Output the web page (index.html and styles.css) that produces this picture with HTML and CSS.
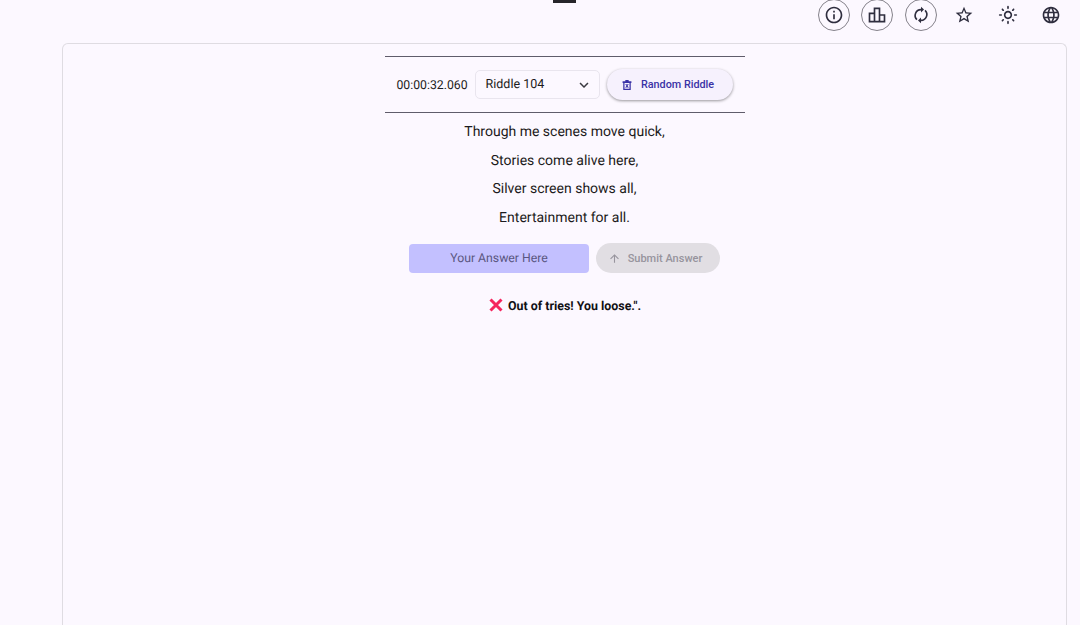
FILE: index.html
```html
<!DOCTYPE html>
<html lang="en">
<head>
    <meta charset="UTF-8">
    <meta name="viewport" content="width=device-width, initial-scale=1.0">
    <title>Riddles</title>
    <link rel="stylesheet" href="styles.css">
</head>
<body>
    <header class="topbar">
        <div class="logo"></div>
        <button class="icon-btn outlined" aria-label="Info">
            <svg viewBox="0 0 24 24"><path d="M11 7h2v2h-2zm0 4h2v6h-2zm1-9C6.48 2 2 6.48 2 12s4.48 10 10 10 10-4.48 10-10S17.52 2 12 2zm0 18c-4.41 0-8-3.59-8-8s3.59-8 8-8 8 3.59 8 8-3.59 8-8 8z"/></svg>
        </button>
        <button class="icon-btn outlined" aria-label="Leaderboard">
            <svg viewBox="0 0 24 24"><path d="M16 11V3H8v6H2v12h20V11h-6zm-6-6h4v14h-4V5zm-6 6h4v8H4v-8zm16 8h-4v-6h4v6z"/></svg>
        </button>
        <button class="icon-btn outlined" aria-label="Reset">
            <svg viewBox="0 0 24 24"><path d="M12 6.500V9l3.600-3.500L12 2v2.500a8 8 0 0 0-5.600 13.700l1.400-1.400A6 6 0 0 1 12 6.500zm5.600-.7-1.400 1.400A6 6 0 0 1 12 17.500V15l-3.600 3.500L12 22v-2.500a8 8 0 0 0 5.600-13.700z"/></svg>
        </button>
        <button class="icon-btn" aria-label="Favourite">
            <svg viewBox="0 0 24 24"><path d="M22 9.24l-7.19-.62L12 2 9.19 8.63 2 9.24l5.46 4.73L5.82 21 12 17.27 18.18 21l-1.63-7.03L22 9.24zM12 15.4l-3.76 2.27 1-4.28-3.32-2.88 4.38-.38L12 6.1l1.71 4.04 4.38.38-3.32 2.88 1 4.28L12 15.4z"/></svg>
        </button>
        <button class="icon-btn" aria-label="Theme">
            <svg viewBox="0 0 24 24"><path d="M12 9c1.65 0 3 1.35 3 3s-1.35 3-3 3-3-1.35-3-3 1.35-3 3-3m0-2c-2.76 0-5 2.24-5 5s2.24 5 5 5 5-2.24 5-5-2.24-5-5-5zM2 13h2c.55 0 1-.45 1-1s-.45-1-1-1H2c-.55 0-1 .45-1 1s.45 1 1 1zm18 0h2c.55 0 1-.45 1-1s-.45-1-1-1h-2c-.55 0-1 .45-1 1s.45 1 1 1zM11 2v2c0 .55.45 1 1 1s1-.45 1-1V2c0-.55-.45-1-1-1s-1 .45-1 1zm0 18v2c0 .55.45 1 1 1s1-.45 1-1v-2c0-.55-.45-1-1-1s-1 .45-1 1zM5.99 4.58c-.39-.39-1.03-.39-1.41 0-.39.39-.39 1.03 0 1.41l1.06 1.06c.39.39 1.03.39 1.41 0s.39-1.03 0-1.41L5.99 4.58zm12.37 12.37c-.39-.39-1.03-.39-1.41 0-.39.39-.39 1.03 0 1.41l1.06 1.06c.39.39 1.03.39 1.41 0 .39-.39.39-1.03 0-1.41l-1.06-1.06zm1.06-10.96c.39-.39.39-1.03 0-1.41-.39-.39-1.03-.39-1.41 0l-1.06 1.06c-.39.39-.39 1.03 0 1.41s1.03.39 1.41 0l1.06-1.06zM7.05 18.36c.39-.39.39-1.03 0-1.41-.39-.39-1.03-.39-1.41 0l-1.06 1.06c-.39.39-.39 1.03 0 1.41s1.03.39 1.41 0l1.06-1.06z"/></svg>
        </button>
        <button class="icon-btn" aria-label="Language">
            <svg viewBox="0 0 24 24"><path d="M11.99 2C6.47 2 2 6.48 2 12s4.47 10 9.99 10C17.52 22 22 17.52 22 12S17.52 2 11.99 2zm6.93 6h-2.95c-.32-1.25-.78-2.45-1.38-3.56 1.84.63 3.37 1.91 4.33 3.56zM12 4.04c.83 1.2 1.48 2.53 1.91 3.96h-3.82c.43-1.43 1.08-2.76 1.91-3.96zM4.26 14C4.1 13.36 4 12.69 4 12s.1-1.36.26-2h3.38c-.08.66-.14 1.32-.14 2 0 .68.06 1.34.14 2H4.26zm.82 2h2.95c.32 1.25.78 2.45 1.38 3.56-1.84-.63-3.37-1.9-4.33-3.56zm2.95-8H5.08c.96-1.66 2.49-2.93 4.33-3.56C8.81 5.55 8.35 6.75 8.03 8zM12 19.96c-.83-1.2-1.48-2.53-1.91-3.96h3.82c-.43 1.43-1.08 2.76-1.91 3.96zM14.34 14H9.66c-.09-.66-.16-1.32-.16-2 0-.68.07-1.35.16-2h4.68c.09.65.16 1.32.16 2 0 .68-.07 1.34-.16 2zm.25 5.56c.6-1.11 1.06-2.31 1.38-3.56h2.95c-.96 1.65-2.49 2.93-4.33 3.56zM16.36 14c.08-.66.14-1.32.14-2 0-.68-.06-1.34-.14-2h3.38c.16.64.26 1.31.26 2s-.1 1.36-.26 2h-3.38z"/></svg>
        </button>
    </header>

    <main class="card">
        <section class="game">
            <div class="toolbar">
                <span class="timer">00:00:32.060</span>
                <div class="select">
                    <span>Riddle 104</span>
                    <svg viewBox="0 0 24 24"><path d="M7.41 8.59L12 13.17l4.59-4.58L18 10l-6 6-6-6 1.41-1.41z"/></svg>
                </div>
                <button class="random-btn">
                    <svg viewBox="0 0 12 12"><path d="M4 0h4v1.500h3.300v2H10.500V12h-9V3.500H.7v-2H4V0zM3 3.500V10.500h6V3.500H3zm.9 1.300h1.300L6 6l.8-1.200h1.300L6.700 7l1.400 2.200H6.800L6 8 5.200 9.200H3.900L5.300 7 3.900 4.800z"/></svg>
                    Random Riddle
                </button>
            </div>

            <div class="poem">
                <p>Through me scenes move quick,</p>
                <p>Stories come alive here,</p>
                <p>Silver screen shows all,</p>
                <p>Entertainment for all.</p>
            </div>

            <div class="answer-row">
                <div class="answer">Your Answer Here</div>
                <button class="submit-btn" disabled>
                    <svg viewBox="0 0 24 24"><path d="M4 12l1.410 1.410L11 7.830V20h2V7.830l5.580 5.590L20 12l-8-8-8 8z"/></svg>
                    Submit Answer
                </button>
            </div>

            <div class="result">
                <svg viewBox="0 0 14 14"><path d="M1.500 1.500l11 11M12.500 1.500l-11 11"/></svg>
                <span>Out of tries! You loose.".</span>
            </div>
        </section>
    </main>
</body>
</html>
```

FILE: styles.css
```css
* {
    box-sizing: border-box;
}
html, body {
    height: 100%;
}
body {
    margin: 0;
    overflow: hidden;
    background-color: #fcf8ff;
    color: #1c1b20;
    font-family: Roboto, "Liberation Sans", sans-serif;
    text-rendering: geometricPrecision;
}
button {
    font-family: inherit;
    border: none;
    padding: 0;
}

.topbar {
    height: 43px;
    display: flex;
    align-items: flex-start;
    gap: 11.4px;
    padding-right: 13px;
}
.logo {
    width: 23px;
    height: 3px;
    margin-left: 553px;
    margin-right: auto;
    background-color: #26252a;
}
.icon-btn {
    width: 32px;
    height: 32px;
    margin-top: -1px;
    flex-shrink: 0;
    display: flex;
    align-items: center;
    justify-content: center;
    background: none;
    border-radius: 50%;
}
.icon-btn svg {
    width: 20px;
    height: 20px;
    fill: #2f2e3f;
}
.icon-btn.outlined {
    border: 1px solid #85828b;
}

.card {
    height: 582px;
    margin: 0 13px 0 62px;
    padding-top: 12px;
    border: 1px solid #dfdce2;
    border-bottom: none;
    border-radius: 6px 6px 0 0;
}
.game {
    width: 360px;
    margin: 0 auto;
    display: flex;
    flex-direction: column;
    align-items: center;
}

.toolbar {
    width: 100%;
    height: 57px;
    display: flex;
    align-items: center;
    justify-content: center;
    gap: 7px;
    border-top: 1px solid #5f5c6b;
    border-bottom: 1px solid #5f5c6b;
}
.timer {
    font-size: 12.25px;
    color: #1c1b20;
}
.select {
    width: 125px;
    height: 29px;
    display: flex;
    align-items: center;
    justify-content: space-between;
    padding: 0 6px 0 10px;
    border: 1px solid #e9e5ee;
    border-radius: 5px;
    font-size: 12.5px;
}
.select svg {
    width: 18px;
    height: 18px;
    fill: #3a3940;
}
.random-btn {
    width: 126px;
    height: 31px;
    display: flex;
    align-items: center;
    justify-content: center;
    gap: 9px;
    padding-right: 3px;
    border-radius: 16px;
    background-color: #f6f1fd;
    color: #3a32a6;
    font-size: 10.8px;
    font-weight: 500;
    box-shadow: 0 1px 3px rgba(0, 0, 0, 0.4);
}
.random-btn svg {
    width: 10px;
    height: 10px;
    fill: #3a32a6;
}

.poem {
    margin-top: 5px;
    text-align: center;
    font-size: 14px;
}
.poem p {
    margin: 0;
    height: 28.6px;
    line-height: 28.6px;
}

.answer-row {
    margin-top: 11px;
    display: flex;
    align-items: center;
    gap: 7px;
}
.answer {
    width: 180px;
    height: 29px;
    display: flex;
    align-items: center;
    justify-content: center;
    border-radius: 4px;
    background-color: #c3c0ff;
    color: #5a5680;
    font-size: 12.25px;
}
.submit-btn {
    width: 124px;
    height: 30px;
    display: flex;
    align-items: center;
    justify-content: center;
    gap: 7px;
    padding-right: 6px;
    border-radius: 15px;
    background-color: #e1dee3;
    color: #97949d;
    font-size: 11px;
    font-weight: 500;
}
.submit-btn svg {
    width: 13px;
    height: 13px;
    fill: #97949d;
}

.result {
    margin-top: 25px;
    padding-left: 1px;
    display: flex;
    align-items: center;
    gap: 5px;
    font-size: 12.4px;
    font-weight: 700;
    color: #111014;
}
.result svg {
    width: 14px;
    height: 14px;
    margin-bottom: 2px;
    fill: none;
    stroke: #f5245d;
    stroke-width: 3;
}
```
